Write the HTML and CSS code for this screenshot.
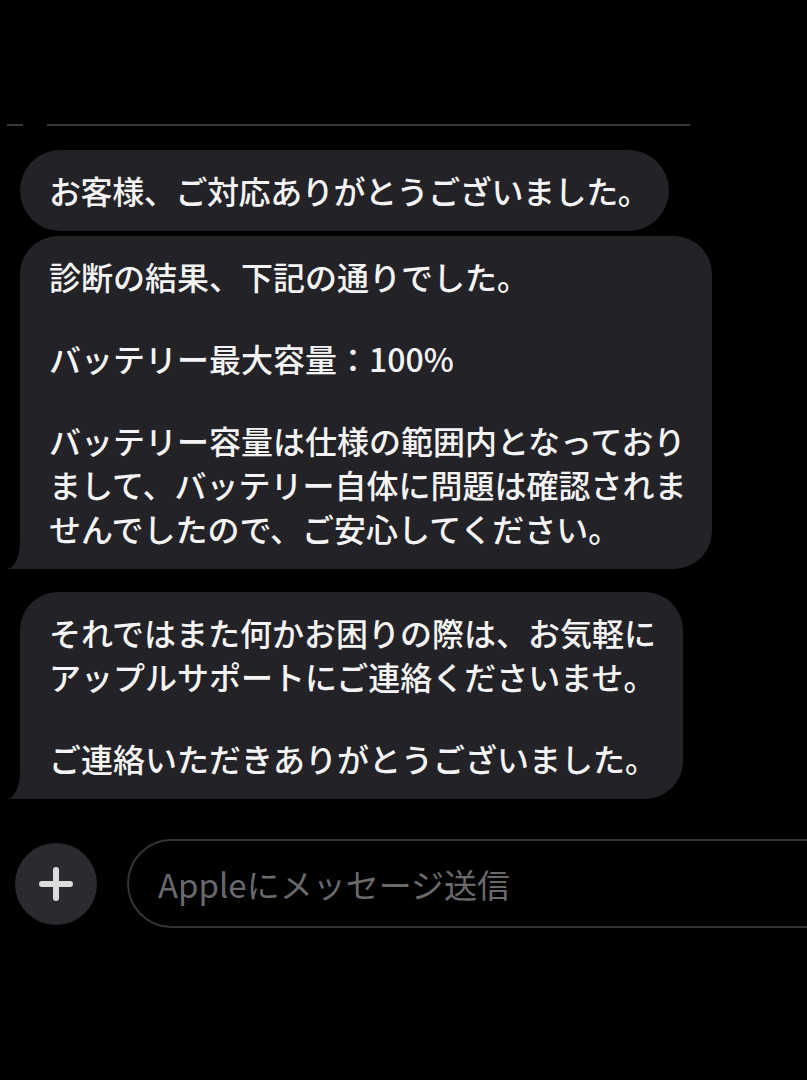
FILE: index.html
```html
<!DOCTYPE html>
<html lang="ja">
<head>
<meta charset="utf-8">
<title>Apple サポート</title>
<link rel="stylesheet" href="styles.css">
</head>
<body>
<div class="screen">
  <div class="divider">
    <span class="seg seg-short"></span>
    <span class="seg seg-long"></span>
  </div>
  <div class="thread">
    <div class="bubble bubble-short">
      <p>お客様、ご対応ありがとうございました。</p>
    </div>
    <div class="bubble tail gap-small">
      <p>診断の結果、下記の通りでした。</p>
      <p>バッテリー最大容量：100%</p>
      <p>バッテリー容量は仕様の範囲内となっており<br>まして、バッテリー自体に問題は確認されま<br>せんでしたので、ご安心してください。</p>
    </div>
    <div class="bubble tail gap-large">
      <p>それではまた何かお困りの際は、お気軽に<br>アップルサポートにご連絡くださいませ。</p>
      <p>ご連絡いただきありがとうございました。</p>
    </div>
  </div>
  <div class="composer">
    <div class="plus-btn">
      <svg width="34" height="34" viewBox="0 0 34 34" aria-hidden="true">
        <path d="M17 3 V31 M3 17 H31" stroke="#dcdcdc" stroke-width="6" stroke-linecap="round" fill="none"/>
      </svg>
    </div>
    <div class="input-field">
      <span class="placeholder">Appleにメッセージ送信</span>
    </div>
  </div>
</div>
</body>
</html>
```
FILE: styles.css
```css
html, body {
  margin: 0;
  padding: 0;
  background: #000;
}
body {
  width: 807px;
  height: 1080px;
  overflow: hidden;
  font-family: "Noto Sans CJK JP", "Noto Sans", sans-serif;
}
.screen {
  width: 807px;
  height: 1080px;
  overflow: hidden;
}
.divider {
  display: flex;
  gap: 24px;
  padding: 124px 0 0 7px;
}
.seg {
  display: block;
  height: 2px;
  background: #38383b;
}
.seg-short {
  width: 16px;
}
.seg-long {
  width: 643px;
}
.thread {
  display: flex;
  flex-direction: column;
  align-items: flex-start;
  padding: 24px 0 0 20px;
}
.bubble {
  position: relative;
  background: #232327;
  color: #f4f4f4;
  border-radius: 38px;
  padding: 18px 26px 19px 29px;
  font-size: 32px;
  line-height: 44px;
  font-weight: 500;
  white-space: nowrap;
}
.bubble-short {
  border-radius: 41px;
  padding-right: 20px;
  letter-spacing: -0.4px;
}
.bubble p {
  margin: 0;
}
.bubble p + p {
  margin-top: 38px;
}
.gap-small {
  margin-top: 5px;
}
.gap-large {
  margin-top: 23px;
}
.tail {
  border-bottom-left-radius: 18px;
}
.tail::before {
  content: "";
  position: absolute;
  left: -12px;
  bottom: 0;
  width: 32px;
  height: 28px;
  background: #232327;
}
.tail::after {
  content: "";
  position: absolute;
  left: -34px;
  bottom: 0;
  width: 34px;
  height: 28px;
  background: #000;
  border-bottom-right-radius: 13px 28px;
}
.composer {
  display: flex;
  align-items: center;
  gap: 30px;
  padding: 40px 0 0 15px;
}
.plus-btn {
  flex: none;
  width: 82px;
  height: 82px;
  border-radius: 50%;
  background: #2b2b2f;
  display: flex;
  align-items: center;
  justify-content: center;
}
.input-field {
  flex: none;
  box-sizing: border-box;
  width: 740px;
  height: 89px;
  border: 2px solid #343437;
  border-radius: 45px;
  display: flex;
  align-items: center;
  padding-left: 29px;
}
.placeholder {
  font-size: 33px;
  color: #6a6a6d;
  font-weight: 400;
}
```
